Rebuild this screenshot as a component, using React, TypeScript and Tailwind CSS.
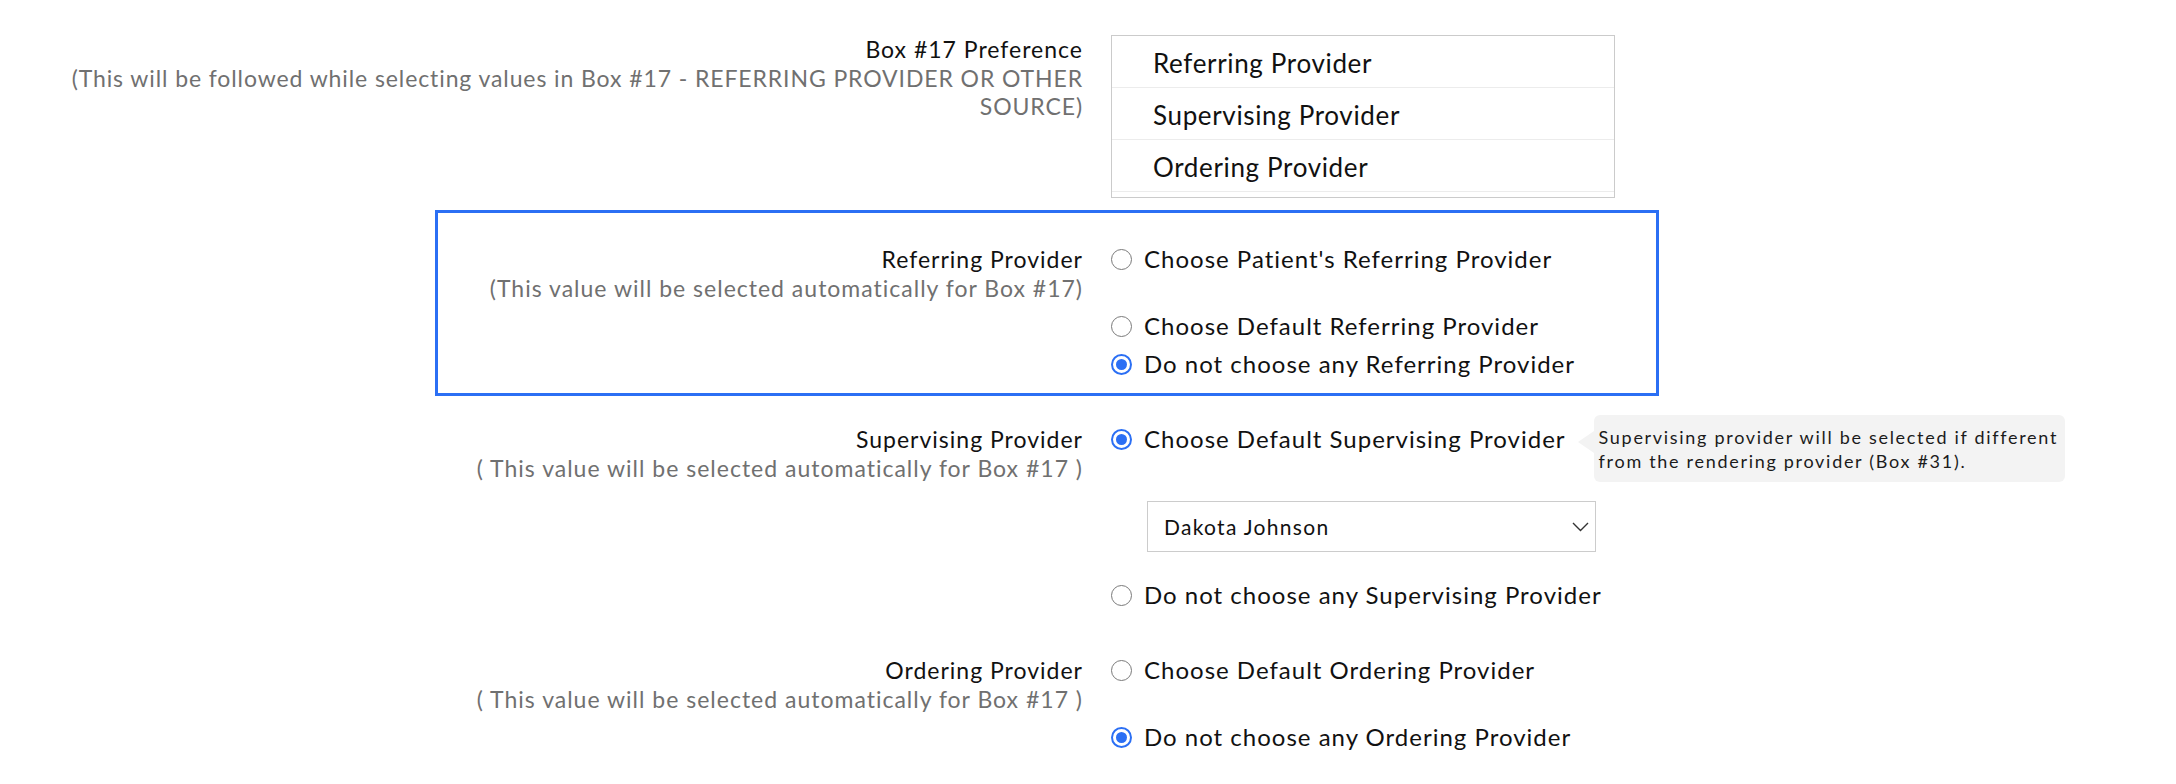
import { ReactNode } from "react";

function Radio({ checked, children }: { checked?: boolean; children: ReactNode }) {
  return (
    <label className="flex h-[38px] items-center gap-[12px]">
      {checked ? (
        <span className="flex h-[21px] w-[21px] shrink-0 items-center justify-center rounded-full border-2 border-[#2b6ff4] bg-white">
          <span className="h-[11px] w-[11px] rounded-full bg-[#2b6ff4]" />
        </span>
      ) : (
        <span className="h-[21px] w-[21px] shrink-0 rounded-full border-[1.5px] border-[#7a7a7a] bg-white" />
      )}
      <span className="relative whitespace-nowrap text-[24px] leading-[30px] tracking-[1px] text-[#111]">{children}</span>
    </label>
  );
}

function FieldLabel({ title, note }: { title: string; note: string }) {
  return (
    <div className="-mr-[1px] pt-[4px] text-right text-[23px] tracking-[1px]">
      <div className="leading-[30px] text-[#111]">{title}</div>
      <div className="leading-[28px] text-[#707070]">{note}</div>
    </div>
  );
}

export default function App() {
  return (
    <div className="min-h-screen bg-white pt-[34px] font-['Lato',_'Noto_Sans',_sans-serif]">
      {/* Box #17 preference */}
      <div className="flex">
        <div className="-mr-[1px] w-[1083px] shrink-0 pl-[40px] text-right text-[23px] tracking-[1px]">
          <div className="leading-[30px] text-[#111]">Box #17 Preference</div>
          <div className="leading-[28px] tracking-[0.9px] text-[#707070]">
            (This will be followed while selecting values in Box #17 - REFERRING PROVIDER OR OTHER SOURCE)
          </div>
        </div>
        <div className="ml-[29px] mt-[1px] h-[163px] w-[504px] overflow-hidden border border-[#cbcbcb]">
          {["Referring Provider", "Supervising Provider", "Ordering Provider", ""].map((item, i) => (
            <div
              key={i}
              className="flex h-[52px] items-center border-b border-[#ececec] pl-[41px] pt-[4px] text-[26px] tracking-[0.65px] text-[#111]"
            >
              {item}
            </div>
          ))}
        </div>
      </div>

      {/* Referring provider (highlighted) */}
      <div className="ml-[435px] mt-[12px] flex w-[1224px] border-[3px] border-[#2b6ff4] pb-[10px] pt-[27px]">
        <div className="w-[644px] shrink-0">
          <FieldLabel title="Referring Provider" note="(This value will be selected automatically for Box #17)" />
        </div>
        <div className="ml-[29px] flex flex-col">
          <Radio>Choose Patient's Referring Provider</Radio>
          <div className="mt-[29px]">
            <Radio>Choose Default Referring Provider</Radio>
          </div>
          <Radio checked>Do not choose any Referring Provider</Radio>
        </div>
      </div>

      {/* Supervising provider */}
      <div className="mt-[24px] flex">
        <div className="w-[1082px] shrink-0">
          <FieldLabel title="Supervising Provider" note="( This value will be selected automatically for Box #17 )" />
        </div>
        <div className="ml-[29px] flex flex-col">
          <label className="flex h-[38px] items-center gap-[12px]">
            <span className="flex h-[21px] w-[21px] shrink-0 items-center justify-center rounded-full border-2 border-[#2b6ff4] bg-white">
              <span className="h-[11px] w-[11px] rounded-full bg-[#2b6ff4]" />
            </span>
            <span className="relative whitespace-nowrap text-[24px] leading-[30px] tracking-[1px] text-[#111]">
              Choose Default Supervising Provider
              <span className="absolute left-full top-[calc(50%-24px)] ml-[28px] w-[471px] rounded-[6px] bg-[#f3f3f3] px-[5px] pb-[9px] pt-[10px] text-[18px] leading-[24px] tracking-[1.7px] text-[#1b1b1b]">
                <span className="absolute left-[-16px] top-[16px] h-0 w-0 border-y-[11px] border-r-[16px] border-y-transparent border-r-[#f3f3f3]" />
                Supervising provider will be selected if different
                <br />
                from the rendering provider (Box #31).
              </span>
            </span>
          </label>
          <div className="ml-[36px] mt-[43px] flex h-[51px] w-[449px] items-center justify-between border border-[#cccccc] pl-[16px] pr-[6px]">
            <span className="text-[21px] tracking-[1.3px] text-[#111]">Dakota Johnson</span>
            <svg width="17" height="10" viewBox="0 0 17 10" fill="none">
              <polyline points="1,1 8.5,8.5 16,1" stroke="#333" strokeWidth="1.4" />
            </svg>
          </div>
          <div className="mt-[24px]">
            <Radio>Do not choose any Supervising Provider</Radio>
          </div>
        </div>
      </div>

      {/* Ordering provider */}
      <div className="mt-[37px] flex">
        <div className="w-[1082px] shrink-0">
          <FieldLabel title="Ordering Provider" note="( This value will be selected automatically for Box #17 )" />
        </div>
        <div className="ml-[29px] flex flex-col">
          <Radio>Choose Default Ordering Provider</Radio>
          <div className="mt-[29px]">
            <Radio checked>Do not choose any Ordering Provider</Radio>
          </div>
        </div>
      </div>
    </div>
  );
}
